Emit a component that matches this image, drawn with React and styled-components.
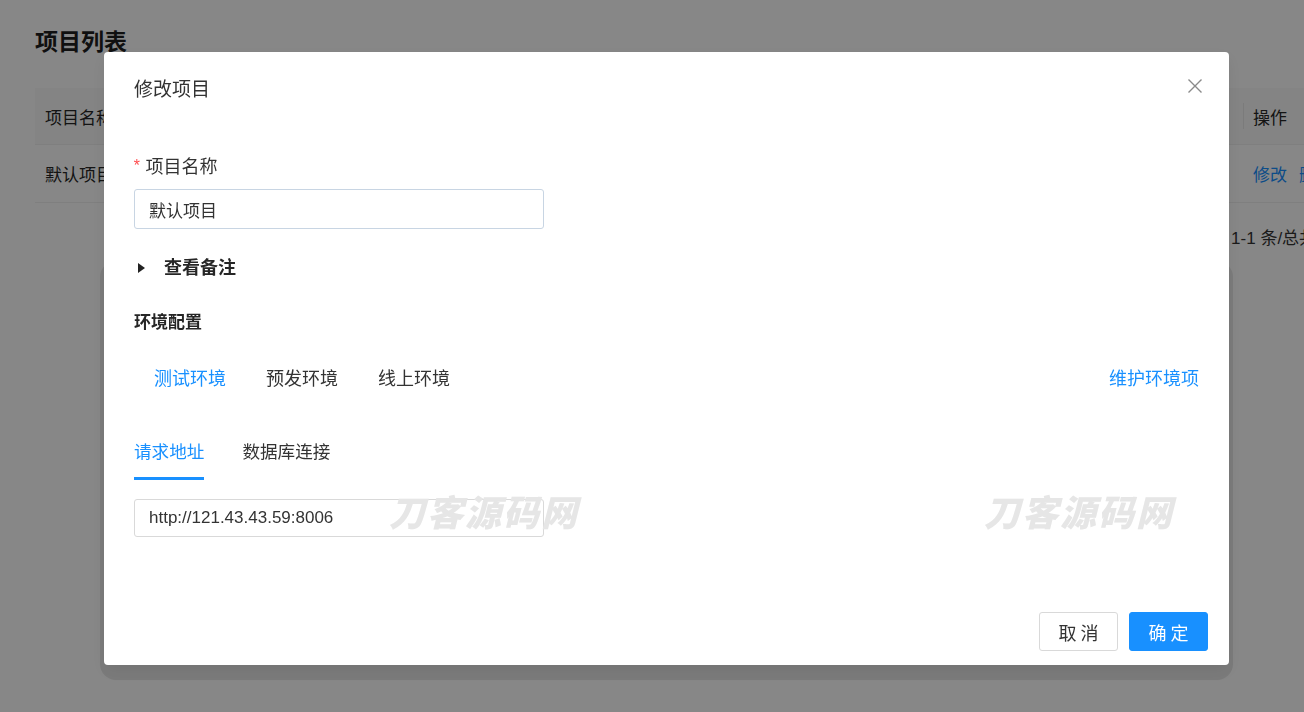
import React, { useState } from 'react';
import styled, { createGlobalStyle } from 'styled-components';

const GlobalStyle = createGlobalStyle`
    html, body {
        margin: 0;
        padding: 0;
        background: #ffffff;
        overflow: hidden;
    }
    body {
        font-family: "Liberation Sans", "Noto Sans CJK SC", sans-serif;
        color: #333;
    }
    * {
        box-sizing: border-box;
    }
`;

const Page = styled.div`
    width: 1420px;
    height: 712px;
    padding: 28px 0 0 35px;
`;

const PageTitle = styled.h2`
    margin: 0;
    font-size: 23px;
    line-height: 28px;
    font-weight: 700;
    color: #1f1f1f;
`;

const Table = styled.div`
    margin-top: 32px;
    display: grid;
    grid-template-columns: 1208px 170px;
`;

const Cell = styled.div`
    position: relative;
    height: ${p => (p.$head ? 57 : 58)}px;
    display: flex;
    align-items: center;
    padding: 0 10px;
    font-size: 17px;
    color: ${p => (p.$link ? '#1890ff' : '#262626')};
    background: ${p => (p.$head ? '#fafafa' : '#fff')};
    border-bottom: 1px solid #f0f0f0;
    gap: 12px;

    &::before {
        content: '';
        display: ${p => (p.$divider ? 'block' : 'none')};
        position: absolute;
        left: 0;
        top: 15px;
        bottom: 15px;
        width: 1px;
        background: #e8e8e8;
    }
`;

const Pager = styled.div`
    width: 1378px;
    display: flex;
    justify-content: flex-end;
    padding: 24px 61px 0 0;
    font-size: 17px;
    line-height: 24px;
    color: #333;
`;

const BackCard = styled.div`
    margin: 10px 0 0 65px;
    width: 1133px;
    height: 419px;
    border-radius: 16px;
    background: #e9e9e9;
`;

const Overlay = styled.div`
    position: fixed;
    inset: 0;
    background: rgba(0, 0, 0, 0.47);
    padding: 52px 0 0 104px;
`;

const Modal = styled.div`
    position: relative;
    width: 1125px;
    height: 613px;
    background: #fff;
    border-radius: 4px;
    box-shadow: 0 6px 16px rgba(0, 0, 0, 0.08);
    display: flex;
    flex-direction: column;
`;

const ModalHeader = styled.div`
    height: 70px;
    display: flex;
    align-items: center;
    justify-content: space-between;
    padding: 0 26px 2px 30px;
`;

const ModalTitle = styled.div`
    font-size: 19px;
    color: #333;
    margin-top: 2px;
`;

const CloseButton = styled.button`
    width: 16px;
    height: 16px;
    padding: 0;
    border: none;
    background: none;
    cursor: pointer;
    display: flex;
    align-items: center;
    justify-content: center;
`;

const ModalBody = styled.div`
    padding: 33px 30px 0;
    display: flex;
    flex-direction: column;
`;

const Label = styled.div`
    font-size: 18px;
    line-height: 24px;
    color: #333;
    display: flex;
    align-items: center;

    &::before {
        content: '*';
        color: #ff4d4f;
        margin-right: 4px;
        margin-left: -2px;
        font-size: 16px;
        font-family: "Liberation Mono", monospace;
    }
`;

const TextInput = styled.input`
    width: 410px;
    height: ${p => (p.$active ? 40 : 38)}px;
    margin-top: ${p => p.$gap || 0}px;
    padding: 0 14px;
    border: 1px solid ${p => (p.$active ? '#c8d5e3' : '#d9d9d9')};
    border-radius: 3px;
    font-family: inherit;
    font-size: 17px;
    color: #333;
    outline: none;
`;

const Collapse = styled.div`
    margin-top: 27px;
    display: flex;
    align-items: center;
    font-size: 18px;
    line-height: 24px;
    font-weight: 700;
    color: #262626;
    cursor: pointer;
`;

const Caret = styled.span`
    width: 0;
    height: 0;
    margin: 0 19px 0 4px;
    border-top: 5px solid transparent;
    border-bottom: 5px solid transparent;
    border-left: 7px solid #222;
`;

const SectionTitle = styled.div`
    margin-top: 31px;
    font-size: 17px;
    line-height: 24px;
    font-weight: 700;
    color: #262626;
`;

const EnvRow = styled.div`
    margin-top: 32px;
    display: flex;
    align-items: center;
    justify-content: space-between;
    padding-left: 20px;
    line-height: 24px;
`;

const EnvTabs = styled.div`
    display: flex;
    gap: 40px;
`;

const EnvTab = styled.span`
    font-size: 18px;
    color: ${p => (p.$active ? '#1890ff' : '#333')};
    cursor: pointer;
`;

const LinkText = styled.span`
    font-size: 18px;
    color: #1890ff;
    cursor: pointer;
`;

const SubTabs = styled.div`
    margin-top: 49px;
    display: flex;
    gap: 38px;
`;

const SubTab = styled.div`
    font-size: 17.6px;
    line-height: 24px;
    padding-bottom: 13px;
    color: ${p => (p.$active ? '#1890ff' : '#333')};
    border-bottom: 3px solid ${p => (p.$active ? '#1890ff' : 'transparent')};
    cursor: pointer;
`;

const ModalFooter = styled.div`
    margin-top: auto;
    display: flex;
    justify-content: flex-end;
    gap: 11px;
    padding: 0 21px 14px;
`;

const Button = styled.button`
    width: 79px;
    height: 39px;
    border-radius: 3px;
    font-family: inherit;
    font-size: 18px;
    letter-spacing: 4px;
    text-indent: 4px;
    cursor: pointer;
    border: 1px solid ${p => (p.$primary ? '#1890ff' : '#d9d9d9')};
    background: ${p => (p.$primary ? '#1890ff' : '#fff')};
    color: ${p => (p.$primary ? '#fff' : '#333')};
`;

const Watermark = styled.div`
    position: fixed;
    top: 490px;
    left: ${p => p.$left}px;
    font-family: "Noto Sans CJK SC", sans-serif;
    font-size: 36px;
    line-height: 40px;
    font-weight: 900;
    letter-spacing: 2px;
    color: #e6e6e6;
    transform: skewX(-14deg);
    pointer-events: none;
    white-space: nowrap;
`;

export default function App() {
    const [env, setEnv] = useState(0);
    const [sub, setSub] = useState(0);
    const envs = ['测试环境', '预发环境', '线上环境'];
    const subs = ['请求地址', '数据库连接'];

    return (
        <>
            <GlobalStyle />
            <Page>
                <PageTitle>项目列表</PageTitle>
                <Table>
                    <Cell $head>项目名称</Cell>
                    <Cell $head $divider>操作</Cell>
                    <Cell>默认项目</Cell>
                    <Cell $link>修改 <span>删除</span></Cell>
                </Table>
                <Pager>第 1-1 条/总共 1 条</Pager>
                <BackCard />
            </Page>

            <Overlay>
                <Modal>
                    <ModalHeader>
                        <ModalTitle>修改项目</ModalTitle>
                        <CloseButton aria-label="close">
                            <svg width="16" height="16" viewBox="0 0 16 16">
                                <path d="M1.5 1.5 L14.5 14.5 M14.5 1.5 L1.5 14.5" stroke="#8a8a8a" strokeWidth="1.4" fill="none" />
                            </svg>
                        </CloseButton>
                    </ModalHeader>
                    <ModalBody>
                        <Label>项目名称</Label>
                        <TextInput $active $gap={10} defaultValue="默认项目" />
                        <Collapse>
                            <Caret />
                            查看备注
                        </Collapse>
                        <SectionTitle>环境配置</SectionTitle>
                        <EnvRow>
                            <EnvTabs>
                                {envs.map((e, i) => (
                                    <EnvTab key={e} $active={env === i} onClick={() => setEnv(i)}>{e}</EnvTab>
                                ))}
                            </EnvTabs>
                            <LinkText>维护环境项</LinkText>
                        </EnvRow>
                        <SubTabs>
                            {subs.map((s, i) => (
                                <SubTab key={s} $active={sub === i} onClick={() => setSub(i)}>{s}</SubTab>
                            ))}
                        </SubTabs>
                        <TextInput $gap={19} defaultValue="http://121.43.43.59:8006" />
                    </ModalBody>
                    <ModalFooter>
                        <Button>取消</Button>
                        <Button $primary>确定</Button>
                    </ModalFooter>
                </Modal>
            </Overlay>

            <Watermark $left={393}>刀客源码网</Watermark>
            <Watermark $left={988}>刀客源码网</Watermark>
        </>
    );
}
